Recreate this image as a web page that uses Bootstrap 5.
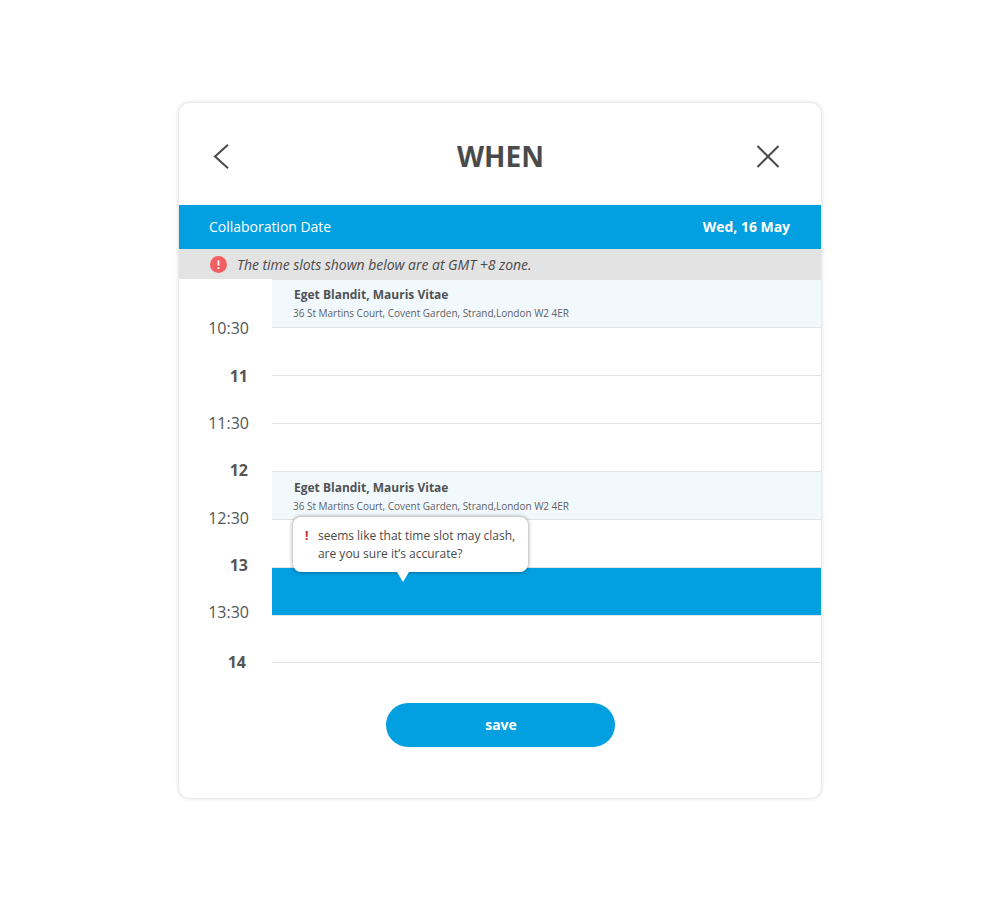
<!DOCTYPE html>
<html lang="en">
<head>
<meta charset="utf-8">
<meta name="viewport" content="width=device-width, initial-scale=1">
<title>When</title>
<link rel="stylesheet" href="https://cdn.jsdelivr.net/npm/bootstrap@5.3.0/dist/css/bootstrap.min.css">
<style>
:root { --brand: #02a0e1; --ink: #4a4a4a; --rule: #e0e2e3; }
body { font-family: "Open Sans", "Noto Sans", sans-serif; color: var(--ink); background: #fff; }
.stage { height: 900px; padding-top: 103px; }
.planner { width: 642px; height: 695px; border-radius: 10px; box-shadow: 0 0 4px rgba(0,0,0,.2); background: #fff; }
.planner-head { height: 102px; padding: 5px 41px 0 34px; }
.planner-title { font-size: 28px; font-weight: 700; line-height: 1; padding: 0 0 1px 15px; }
.date-bar { height: 44px; padding: 0 31px 2px 30px; background: var(--brand); font-size: 14px; color: #fff; }
.date-label { letter-spacing: -.02px; }
.date-value { letter-spacing: -.03px; }
.zone-bar { height: 30px; padding-left: 31px; gap: 10px; background: #e3e3e3; font-size: 14px; font-style: italic; letter-spacing: -.04px; }
.hours { width: 93px; padding-top: 25px; }
.hour { height: 48px; padding-right: 23px; font-size: 16px; line-height: 1; color: #555; }
.hour.full { font-weight: 700; padding-right: 24px; }
.hour.short { height: 46px; }
.hour.last { height: 52px; padding-right: 26px; }
.slot { height: 48px; border-top: 1px solid var(--rule); padding-left: 22px; }
.slot.booked { background: #f2f9fd; }
.slot.picked { background: var(--brand); }
.slot.tail { height: 47px; }
.slot-name { font-size: 12px; font-weight: 700; line-height: 16px; padding-top: 7px; color: #505254; }
.slot-place { font-size: 10px; line-height: 14px; margin: 3px 0 0 -1px; letter-spacing: -.02px; color: #5f6163; }
.slot.noon .slot-name { padding-top: 8px; }
.clash { left: 21px; top: 238px; width: 235px; height: 55px; border-radius: 8px; background: #fff; padding: 10px 0 0 12px; gap: 9.5px; font-size: 12px; line-height: 18px; box-shadow: 0 0 4px rgba(0,0,0,.45); z-index: 2; }
.clash::after { content: ""; position: absolute; left: 104px; top: 100%; border: 6px solid transparent; border-top: 10px solid #fff; border-bottom: 0; }
.clash-mark { color: #c1272d; font-weight: 700; }
.save { width: 229px; height: 44px; margin-top: -6px; background: var(--brand); color: #fff; font-size: 14px; font-weight: 700; }
.save.btn { padding: 0 0 2px 2px; }
</style>
</head>
<body>
<main class="stage d-flex justify-content-center align-items-start">
  <section class="planner d-flex flex-column">
    <header class="planner-head d-flex align-items-center justify-content-between">
      <svg width="17" height="26" viewBox="0 0 17 26" fill="none" stroke="#4a4a4a" stroke-width="2"><path d="M15 .7 2 12.5 15 24.3"/></svg>
      <h1 class="planner-title m-0">WHEN</h1>
      <svg width="24" height="24" viewBox="0 0 24 24" fill="none" stroke="#4a4a4a" stroke-width="2"><path d="M1.5 1 22.5 22M22.5 1 1.5 22"/></svg>
    </header>
    <div class="date-bar d-flex align-items-center justify-content-between">
      <span class="date-label">Collaboration Date</span><span class="date-value fw-bold">Wed, 16 May</span>
    </div>
    <div class="zone-bar d-flex align-items-center">
      <svg width="17" height="17" viewBox="0 0 17 17"><circle cx="8.5" cy="8.5" r="8.5" fill="#f25f63"/><path d="M8.5 4.2V9.6M8.5 11.2V13" stroke="#fff" stroke-width="1.8"/></svg>
      <span class="zone-text">The time slots shown below are at GMT +8 zone.</span>
    </div>
    <div class="d-flex">
      <div class="hours">
        <div class="hour d-flex align-items-center justify-content-end"><span>10:30</span></div>
        <div class="hour full d-flex align-items-center justify-content-end"><span>11</span></div>
        <div class="hour short d-flex align-items-center justify-content-end"><span>11:30</span></div>
        <div class="hour full d-flex align-items-center justify-content-end"><span>12</span></div>
        <div class="hour d-flex align-items-center justify-content-end"><span>12:30</span></div>
        <div class="hour full short d-flex align-items-center justify-content-end"><span>13</span></div>
        <div class="hour d-flex align-items-center justify-content-end"><span>13:30</span></div>
        <div class="hour full last d-flex align-items-center justify-content-end"><span>14</span></div>
      </div>
      <div class="flex-grow-1 position-relative">
        <div class="slot booked"><div class="slot-name"><span>Eget Blandit, Mauris Vitae</span></div><div class="slot-place"><span>36 St Martins Court, Covent Garden, Strand,London W2 4ER</span></div></div>
        <div class="slot"></div>
        <div class="slot"></div>
        <div class="slot"></div>
        <div class="slot booked noon"><div class="slot-name"><span>Eget Blandit, Mauris Vitae</span></div><div class="slot-place"><span>36 St Martins Court, Covent Garden, Strand,London W2 4ER</span></div></div>
        <div class="slot"></div>
        <div class="slot picked"></div>
        <div class="slot tail"></div>
        <div class="slot tail"></div>
        <div class="clash position-absolute d-flex" role="alert">
          <span class="clash-mark">!</span>
          <span class="clash-text">seems like that time slot may clash,<br>are you sure it’s accurate?</span>
        </div>
      </div>
    </div>
    <button class="save btn rounded-pill border-0 align-self-center" type="button">save</button>
  </section>
</main>
<script src="https://cdn.jsdelivr.net/npm/bootstrap@5.3.0/dist/js/bootstrap.bundle.min.js"></script>
</body>
</html>
